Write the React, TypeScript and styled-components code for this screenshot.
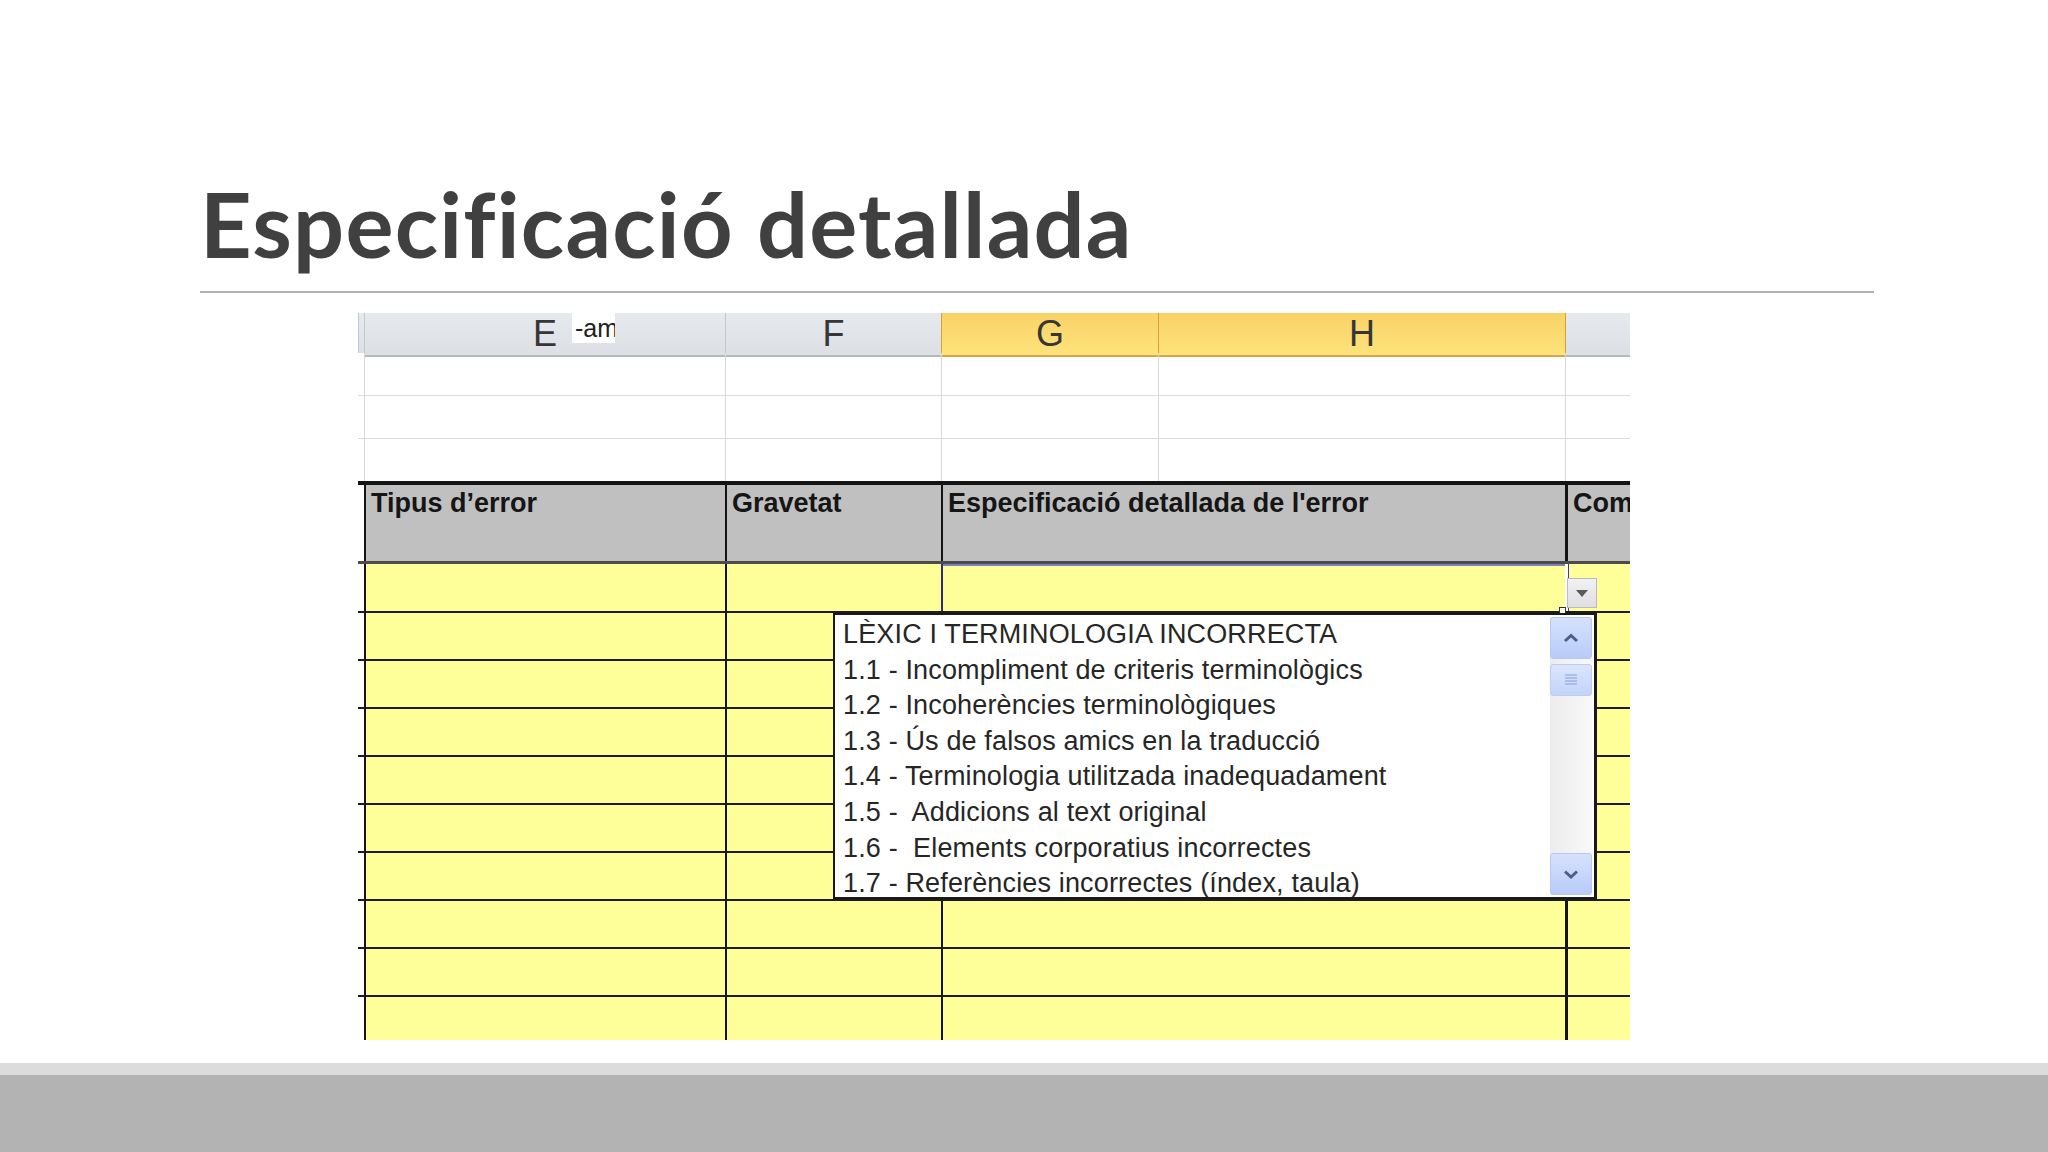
import React from "react"
import styled, { createGlobalStyle } from "styled-components"

const GlobalStyle = createGlobalStyle`
  html, body {
    margin: 0;
    padding: 0;
    background: #fff;
  }
  body {
    width: 2048px;
    height: 1152px;
    overflow: hidden;
    font-family: "Liberation Sans", Arial, sans-serif;
  }
  * {
    box-sizing: border-box;
  }
`

// stub, E, F, G, H, I (clipped)
const COLS = "6px 361px 216px 217px 407px 65px"

const ERRORS = [
  "LÈXIC I TERMINOLOGIA INCORRECTA",
  "1.1 - Incompliment de criteris terminològics",
  "1.2 - Incoherències terminològiques",
  "1.3 - Ús de falsos amics en la traducció",
  "1.4 - Terminologia utilitzada inadequadament",
  "1.5 -  Addicions al text original",
  "1.6 -  Elements corporatius incorrectes",
  "1.7 - Referències incorrectes (índex, taula)",
]

const DATA_ROWS = 10

export default function App() {
  return (
    <Page>
      <GlobalStyle />
      <Slide>
        <Title>Especificació detallada</Title>
        <Rule />
        <Sheet>
          <ColHeaderRow>
            <ColHead />
            <ColHead>E</ColHead>
            <ColHead>F</ColHead>
            <ColHead $active>G</ColHead>
            <ColHead $active>H</ColHead>
            <ColHead $afterActive />
          </ColHeaderRow>

          {[43, 43, 42].map((h, i) => (
            <BlankRow key={i} $h={h} $last={i === 2}>
              <Stub />
              <BlankCell />
              <BlankCell />
              <BlankCell />
              <BlankCell />
              <BlankCell />
            </BlankRow>
          ))}

          <HeadRow>
            <Stub />
            <HeadCell>Tipus d’error</HeadCell>
            <HeadCell>Gravetat</HeadCell>
            <HeadCell $span={2}>Especificació detallada de l'error</HeadCell>
            <HeadCell $thick>Com</HeadCell>
          </HeadRow>

          {Array.from({ length: DATA_ROWS }).map((_, i) => (
            <DataRow key={i} $h={i === 0 ? 49 : 48}>
              <Stub />
              <DataCell />
              <DataCell />
              <DataCell $span={2} $selected={i === 0} />
              <DataCell $thick $afterSel={i === 0} />
            </DataRow>
          ))}

          <NameTip>-am</NameTip>

          <DropButton>
            <svg width="12" height="7" viewBox="0 0 12 7">
              <polygon points="0,0 12,0 6,7" fill="#5a5a5a" />
            </svg>
          </DropButton>
          <FillHandle />

          <DropList>
            <Items>
              {ERRORS.map(t => (
                <Item key={t}>{t}</Item>
              ))}
            </Items>
            <ScrollBar>
              <ScrollButton>
                <svg width="18" height="10" viewBox="0 0 18 10">
                  <polyline
                    points="3,8 9,2.5 15,8"
                    fill="none"
                    stroke="#4b5e88"
                    strokeWidth="3"
                  />
                </svg>
              </ScrollButton>
              <Thumb>
                <svg width="14" height="14" viewBox="0 0 14 14">
                  {[2, 5, 8, 11].map(y => (
                    <line
                      key={y}
                      x1="1"
                      x2="13"
                      y1={y}
                      y2={y}
                      stroke="#93a9df"
                      strokeWidth="1.2"
                    />
                  ))}
                </svg>
              </Thumb>
              <Track />
              <ScrollButton>
                <svg width="18" height="10" viewBox="0 0 18 10">
                  <polyline
                    points="3,2.5 9,8 15,2.5"
                    fill="none"
                    stroke="#4b5e88"
                    strokeWidth="3"
                  />
                </svg>
              </ScrollButton>
            </ScrollBar>
          </DropList>
        </Sheet>
      </Slide>
      <Footer />
    </Page>
  )
}

const Page = styled.div`
  width: 2048px;
  height: 1152px;
  display: flex;
  flex-direction: column;
`

const Slide = styled.div`
  height: 1063px;
  padding: 178px 0 0 200px;
  background: #fff;
`

const Title = styled.h1`
  margin: 0;
  font-family: Lato, "Open Sans", sans-serif;
  font-weight: 700;
  font-size: 90px;
  line-height: 90px;
  letter-spacing: 1.2px;
  font-variant-ligatures: none;
  color: #404040;
  white-space: nowrap;
`

const Rule = styled.div`
  width: 1674px;
  height: 2px;
  margin-top: 23px;
  background: #b0b0b0;
`

const Sheet = styled.div`
  position: relative;
  width: 1272px;
  height: 727px;
  margin: 20px 0 0 158px;
  overflow: hidden;
  background: #fff;
`

const ColHeaderRow = styled.div`
  display: grid;
  grid-template-columns: ${COLS};
  height: 40px;
`

const ColHead = styled.div<{ $active?: boolean; $afterActive?: boolean }>`
  display: flex;
  align-items: center;
  justify-content: center;
  font-size: 36px;
  color: #363636;
  background: ${p =>
    p.$active
      ? "linear-gradient(#f8d266, #ffe37c)"
      : "linear-gradient(#e6e9ed, #dcdfe4)"};
  border-left: 1px solid
    ${p => (p.$active || p.$afterActive ? "#d3a03a" : "#c3c8cf")};
  border-bottom: 2px solid ${p => (p.$active ? "#d7a545" : "#b4b9c0")};
`

const BlankRow = styled.div<{ $h: number; $last?: boolean }>`
  display: grid;
  grid-template-columns: ${COLS};
  height: ${p => p.$h}px;
  border-bottom: ${p => (p.$last ? "none" : "1px solid #dadbdc")};
`

const Stub = styled.div`
  background: #fff;
`

const BlankCell = styled.div`
  border-left: 1px solid #d9d9d9;
`

const HeadRow = styled.div`
  display: grid;
  grid-template-columns: ${COLS};
  height: 83px;
  border-top: 4px solid #141414;
  border-bottom: 3px solid #4c4c4c;
`

const HeadCell = styled.div<{ $span?: number; $thick?: boolean }>`
  grid-column: span ${p => p.$span || 1};
  background: #c0c0c0;
  border-left: ${p => (p.$thick ? 3 : 2)}px solid #141414;
  padding: 3px 0 0 5px;
  font-weight: 700;
  font-size: 27px;
  line-height: 31px;
  color: #151515;
  white-space: nowrap;
  overflow: hidden;
`

const DataRow = styled.div<{ $h: number }>`
  display: grid;
  grid-template-columns: ${COLS};
  height: ${p => p.$h}px;
  border-bottom: 2px solid #1c1c1c;
`

const DataCell = styled.div<{
  $span?: number
  $thick?: boolean
  $selected?: boolean
  $afterSel?: boolean
}>`
  grid-column: span ${p => p.$span || 1};
  background: #ffff99;
  border-left: ${p => (p.$thick ? 3 : 2)}px solid
    ${p => (p.$selected ? "#2e2e78" : p.$afterSel ? "#fff" : "#141414")};
  box-shadow: ${p =>
    p.$selected
      ? "inset 0 2px 0 #7d7dc4"
      : p.$afterSel
      ? "inset 1px 0 0 #3a3aa6"
      : "none"};
`

const NameTip = styled.div`
  position: absolute;
  left: 214px;
  top: 0;
  width: 43px;
  height: 30px;
  padding-left: 3px;
  background: #fff;
  font-size: 25px;
  line-height: 30px;
  color: #222;
  white-space: nowrap;
  overflow: hidden;
`

const DropButton = styled.div`
  position: absolute;
  left: 1209px;
  top: 265px;
  width: 30px;
  height: 30px;
  display: flex;
  align-items: center;
  justify-content: center;
  background: linear-gradient(#f2f2f5, #dedee3);
  border: 1px solid #b9b9c2;
`

const FillHandle = styled.div`
  position: absolute;
  left: 1201px;
  top: 294px;
  width: 7px;
  height: 7px;
  background: #fff;
  border: 1px solid #333;
`

const DropList = styled.div`
  position: absolute;
  left: 475px;
  top: 300px;
  width: 764px;
  height: 287px;
  display: flex;
  background: #fff;
  border: 2px solid #1a1a1a;
  border-right-width: 3px;
  border-bottom-width: 3px;
`

const Items = styled.div`
  flex: 1;
  padding: 2px 0 0 8px;
  overflow: hidden;
`

const Item = styled.div`
  font-family: "Liberation Sans", Tahoma, sans-serif;
  font-size: 27px;
  line-height: 35.6px;
  letter-spacing: 0.15px;
  color: #262626;
  white-space: pre;
`

const ScrollBar = styled.div`
  width: 42px;
  margin: 2px 2px 2px 0;
  display: flex;
  flex-direction: column;
  background: linear-gradient(to right, #ececec, #f9f9f9);
`

const ScrollButton = styled.div`
  height: 42px;
  display: flex;
  align-items: center;
  justify-content: center;
  border: 1px solid #b6c8f3;
  border-radius: 3px;
  background: linear-gradient(#d6e2fd, #b8cbf8);
`

const Thumb = styled.div`
  height: 32px;
  margin-top: 5px;
  display: flex;
  align-items: center;
  justify-content: center;
  border: 1px solid #bccdf5;
  border-radius: 3px;
  background: linear-gradient(#dbe5fd, #c3d3f9);
`

const Track = styled.div`
  flex: 1;
`

const Footer = styled.footer`
  flex: 1;
  border-top: 12px solid #dcdcdc;
  background: #b3b3b3;
`
